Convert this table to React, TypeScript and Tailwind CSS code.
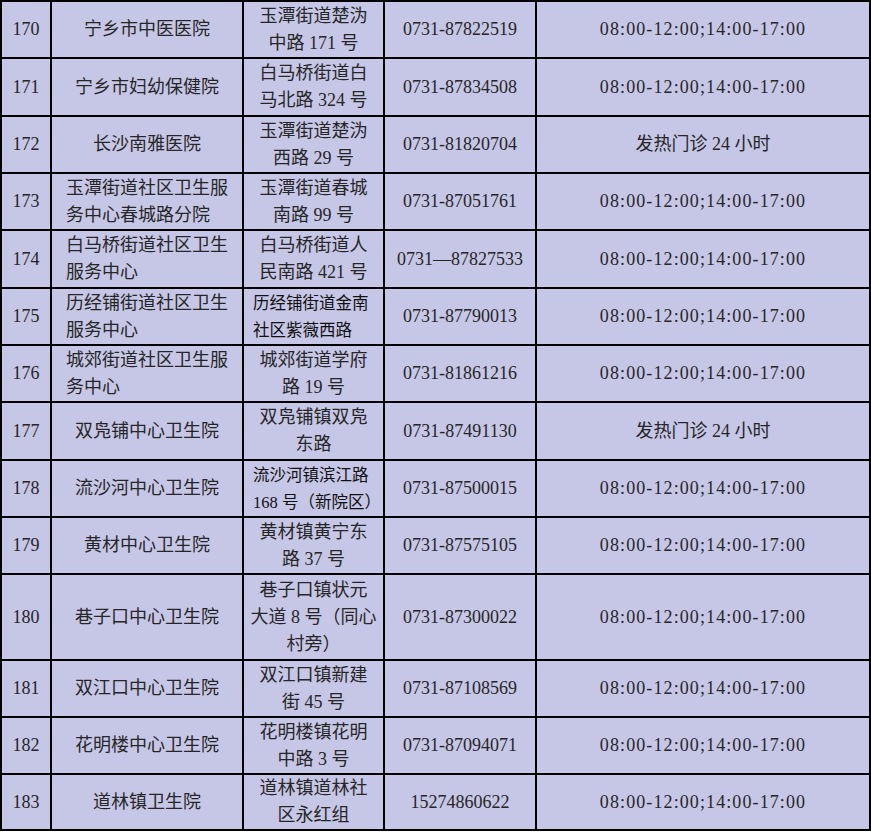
import React from "react";

const HOURS = "08:00-12:00;14:00-17:00";
const FEVER = "发热门诊 24 小时";

type Row = {
  no: string;
  name: string[];
  addr: string[];
  addrLeft?: boolean;
  phone: string;
  time: string;
};

const rows: Row[] = [
  { no: "170", name: ["宁乡市中医医院"], addr: ["玉潭街道楚沩", "中路 171 号"], phone: "0731-87822519", time: HOURS },
  { no: "171", name: ["宁乡市妇幼保健院"], addr: ["白马桥街道白", "马北路 324 号"], phone: "0731-87834508", time: HOURS },
  { no: "172", name: ["长沙南雅医院"], addr: ["玉潭街道楚沩", "西路 29 号"], phone: "0731-81820704", time: FEVER },
  { no: "173", name: ["玉潭街道社区卫生服", "务中心春城路分院"], addr: ["玉潭街道春城", "南路 99 号"], phone: "0731-87051761", time: HOURS },
  { no: "174", name: ["白马桥街道社区卫生", "服务中心"], addr: ["白马桥街道人", "民南路 421 号"], phone: "0731—87827533", time: HOURS },
  { no: "175", name: ["历经铺街道社区卫生", "服务中心"], addr: ["历经铺街道金南", "社区紫薇西路"], addrLeft: true, phone: "0731-87790013", time: HOURS },
  { no: "176", name: ["城郊街道社区卫生服", "务中心"], addr: ["城郊街道学府", "路 19 号"], phone: "0731-81861216", time: HOURS },
  { no: "177", name: ["双凫铺中心卫生院"], addr: ["双凫铺镇双凫", "东路"], phone: "0731-87491130", time: FEVER },
  { no: "178", name: ["流沙河中心卫生院"], addr: ["流沙河镇滨江路", "168 号（新院区）"], addrLeft: true, phone: "0731-87500015", time: HOURS },
  { no: "179", name: ["黄材中心卫生院"], addr: ["黄材镇黄宁东", "路 37 号"], phone: "0731-87575105", time: HOURS },
  { no: "180", name: ["巷子口中心卫生院"], addr: ["巷子口镇状元", "大道 8 号（同心", "村旁）"], phone: "0731-87300022", time: HOURS },
  { no: "181", name: ["双江口中心卫生院"], addr: ["双江口镇新建", "街 45 号"], phone: "0731-87108569", time: HOURS },
  { no: "182", name: ["花明楼中心卫生院"], addr: ["花明楼镇花明", "中路 3 号"], phone: "0731-87094071", time: HOURS },
  { no: "183", name: ["道林镇卫生院"], addr: ["道林镇道林社", "区永红组"], phone: "15274860622", time: HOURS },
];

const cell = "bg-[#c6c6e6] flex items-center whitespace-nowrap";

function Lines({ lines }: { lines: string[] }) {
  return (
    <div>
      {lines.map((l) => (
        <div key={l}>{l}</div>
      ))}
    </div>
  );
}

export default function App() {
  return (
    <div
      className="w-[871px] h-[833px] bg-white text-[18px] leading-[27px] text-[#262626]"
      style={{ fontFamily: '"Liberation Serif", "Noto Sans CJK SC", serif' }}
    >
      <div className="grid grid-cols-[48px_190px_139px_150px_332px] grid-rows-[55px_56px_55px_55px_56px_55px_55px_56px_55px_55px_84px_55px_55px_54px] gap-[2px] bg-black p-[2px]">
        {rows.map((r) => (
          <React.Fragment key={r.no}>
            <div className={`${cell} justify-center`}>{r.no}</div>
            {r.name.length > 1 ? (
              <div className={`${cell} justify-start pl-[14px]`}>
                <Lines lines={r.name} />
              </div>
            ) : (
              <div className={`${cell} justify-center`}>{r.name[0]}</div>
            )}
            {r.addrLeft ? (
              <div className={`${cell} justify-start pl-[9px] text-[#111] text-[16.5px]`}>
                <Lines lines={r.addr} />
              </div>
            ) : (
              <div className={`${cell} justify-center text-center`}>
                <Lines lines={r.addr} />
              </div>
            )}
            <div className={`${cell} justify-center`}>{r.phone}</div>
            <div className={`${cell} justify-center ${r.time === HOURS ? "tracking-[1.1px]" : ""}`}>{r.time}</div>
          </React.Fragment>
        ))}
      </div>
    </div>
  );
}
